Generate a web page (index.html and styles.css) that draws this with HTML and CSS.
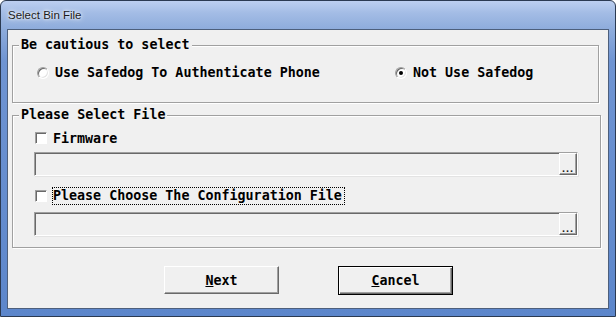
FILE: index.html
```html
<!DOCTYPE html>
<html lang="en">
<head>
    <meta charset="UTF-8">
    <title>Select Bin File</title>
    <link rel="stylesheet" href="styles.css">
</head>
<body>
    <div class="window">
        <div class="titlebar"><span class="title">Select Bin File</span></div>
        <div class="client">
            <div class="group group-safe">
                <span class="group-title">Be cautious to select</span>
                <div class="radio-row">
                    <label class="radio"><span class="radio-dot"></span>Use Safedog To Authenticate Phone</label>
                    <label class="radio checked"><span class="radio-dot"></span>Not Use Safedog</label>
                </div>
            </div>
            <div class="group group-file">
                <span class="group-title">Please Select File</span>
                <label class="check"><span class="box"></span>Firmware</label>
                <div class="path"><span class="browse">...</span></div>
                <label class="check check-focus"><span class="box"></span><span class="focus">Please Choose The Configuration File</span></label>
                <div class="path path-last"><span class="browse">...</span></div>
            </div>
            <div class="buttons">
                <button class="btn"><u>N</u>ext</button>
                <button class="btn default"><u>C</u>ancel</button>
            </div>
        </div>
    </div>
</body>
</html>
```

FILE: styles.css
```css
body {
    margin: 0;
    background: #fff;
    font-family: "DejaVu Sans Mono", "Liberation Mono", monospace;
    font-size: 13.33px;
    color: #000;
}
.window {
    width: 616px;
    height: 317px;
    box-sizing: border-box;
    border: 1px solid #2b3a52;
    border-radius: 6px 6px 0 0;
    background: linear-gradient(to bottom, #bccff0 0, #a3bce5 12px, #8eacdc 28px, #6f94d2 60px, #5c86cb 100%);
    padding: 0 6px 7px 6px;
    display: flex;
    flex-direction: column;
}
.titlebar {
    height: 28px;
    display: flex;
    align-items: center;
    padding-left: 1px;
}
.title {
    font-family: "Liberation Sans", Arial, sans-serif;
    font-size: 11.5px;
    color: #1b1b1b;
    text-shadow: 0 0 6px #fff, 0 0 3px #fff;
}
.client {
    flex: 1;
    border: 1px solid #4d5f7c;
    background: #f0f0f0;
    padding: 15px 0 0 4px;
}
.group {
    position: relative;
    box-sizing: border-box;
    border: 1px solid #a0a0a0;
    box-shadow: inset 1px 1px 0 #fff, 1px 1px 0 #fff;
}
.group-title {
    position: absolute;
    top: -9px;
    left: 6px;
    padding: 0 2px;
    background: #f0f0f0;
    line-height: 16px;
    font-weight: bold;
}
.group-safe {
    width: 587px;
    height: 58px;
    margin-bottom: 12px;
    padding: 19px 0 0 24px;
}
.group-file {
    width: 589px;
    height: 133px;
    padding: 14px 0 0 22px;
}
.radio-row {
    display: flex;
    height: 16px;
}
.radio {
    display: flex;
    align-items: center;
    gap: 6px;
    line-height: 16px;
    font-weight: bold;
}
.radio:first-child {
    width: 358px;
}
.radio-dot {
    position: relative;
    width: 12px;
    height: 12px;
    box-sizing: border-box;
    border-radius: 50%;
    border: 1px solid;
    border-color: #a0a0a0 #fff #fff #a0a0a0;
    box-shadow: inset 1px 1px 0 #696969, inset -1px -1px 0 #e3e3e3;
    background: #fff;
}
.radio.checked .radio-dot::after {
    content: "";
    position: absolute;
    left: 3px;
    top: 3px;
    width: 4px;
    height: 4px;
    border-radius: 50%;
    background: #000;
}
.check {
    display: flex;
    align-items: center;
    gap: 6px;
    height: 16px;
    font-weight: bold;
}
.check-focus {
    height: 18px;
    margin-top: 11px;
}
.box {
    width: 12px;
    height: 12px;
    box-sizing: border-box;
    border: 1px solid;
    border-color: #a0a0a0 #fff #fff #a0a0a0;
    box-shadow: inset 1px 1px 0 #696969;
    background: #fff;
}
.focus {
    margin-left: -1px;
    padding-right: 2px;
    line-height: 16px;
    border: 1px dotted #000;
}
.path {
    width: 544px;
    height: 24px;
    box-sizing: border-box;
    margin: 6px 0 0 -1px;
    border: 1px solid;
    border-color: #a0a0a0 #fff #fff #a0a0a0;
    box-shadow: inset 1px 1px 0 #696969, 1px 1px 0 #e3e3e3;
    display: flex;
    justify-content: flex-end;
}
.path-last {
    margin-top: 7px;
}
.browse {
    width: 18px;
    box-sizing: border-box;
    border: 1px solid;
    border-color: #fff #696969 #696969 #fff;
    box-shadow: inset -1px -1px 0 #a0a0a0;
    display: flex;
    align-items: flex-end;
    justify-content: center;
    padding-bottom: 2px;
    font-family: "Liberation Sans", Arial, sans-serif;
    font-weight: bold;
    font-size: 11px;
    line-height: 8px;
    letter-spacing: 1px;
    color: #222;
}
.buttons {
    display: flex;
    gap: 59px;
    margin: 18px 0 0 152px;
}
.btn {
    width: 115px;
    height: 28px;
    padding: 0;
    font-family: inherit;
    font-size: 13.33px;
    font-weight: bold;
    color: #000;
    background: #f0f0f0;
    border: 1px solid;
    border-color: #fff #696969 #696969 #fff;
    box-shadow: inset -1px -1px 0 #a0a0a0;
}
.btn.default {
    height: 29px;
    border: 1px solid #000;
    box-shadow: inset 1px 1px 0 #fff, inset -1px -1px 0 #696969, inset -2px -2px 0 #a0a0a0;
}
```
